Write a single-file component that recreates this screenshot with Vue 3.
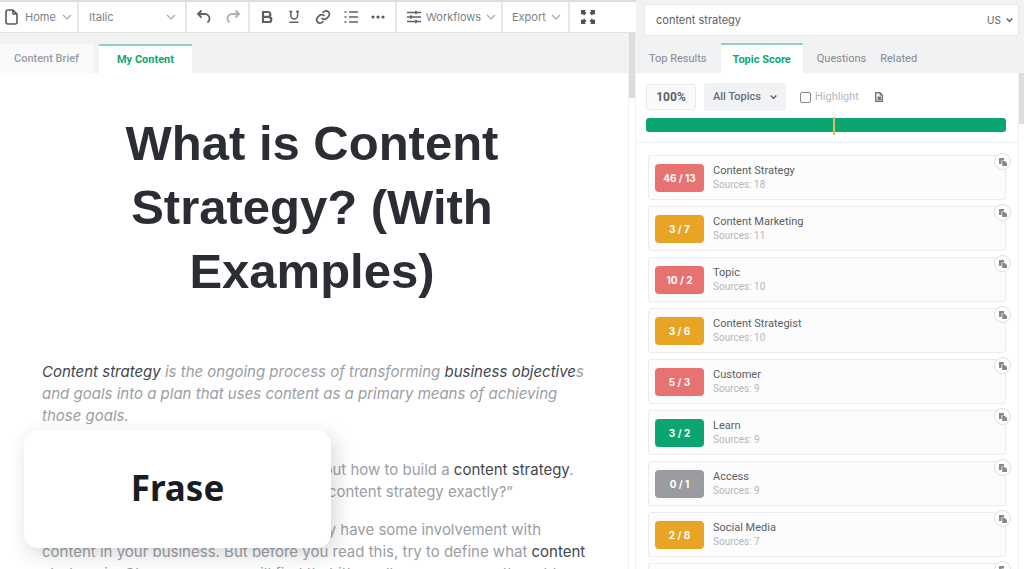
<script setup>
import { ref } from 'vue'

const query = ref('content strategy')
const highlight = ref(false)
const editorTabs = ['Content Brief', 'My Content']
const panelTabs = ['Top Results', 'Topic Score', 'Questions', 'Related']
const topics = [
  { score: '46 / 13', name: 'Content Strategy', sources: 18, tone: 'red' },
  { score: '3 / 7', name: 'Content Marketing', sources: 11, tone: 'amber' },
  { score: '10 / 2', name: 'Topic', sources: 10, tone: 'red' },
  { score: '3 / 6', name: 'Content Strategist', sources: 10, tone: 'amber' },
  { score: '5 / 3', name: 'Customer', sources: 9, tone: 'red' },
  { score: '3 / 2', name: 'Learn', sources: 9, tone: 'green' },
  { score: '0 / 1', name: 'Access', sources: 9, tone: 'grey' },
  { score: '2 / 8', name: 'Social Media', sources: 7, tone: 'amber' },
  { score: '1 / 3', name: 'Audience', sources: 7, tone: 'amber' },
]
</script>

<template>
  <div class="app">
    <main class="editor">
      <div class="toolbar">
        <div class="group home">
          <button class="tool labelled">
            <svg width="14" height="18" viewBox="0 0 14 18"><path d="M3 2h5l4 4v8a2 2 0 0 1-2 2H3a2 2 0 0 1-2-2V4a2 2 0 0 1 2-2zM8 2v4h4" fill="none" stroke="#555a61" stroke-width="1.6" stroke-linejoin="round" /></svg>
            <span>Home</span>
            <svg class="chev" viewBox="0 0 10 6"><path d="M1 1l4 4 4-4" /></svg>
          </button>
        </div>
        <div class="group style">
          <select aria-label="Text style"><option>Italic</option></select>
          <svg class="chev" viewBox="0 0 10 6"><path d="M1 1l4 4 4-4" /></svg>
        </div>
        <div class="group history">
          <button class="tool" aria-label="Undo"><svg width="16" height="16" viewBox="0 0 16 16" class="line"><path d="M5.500 1.500L2 5l3.500 3.500M2.500 5h6.500a4.500 4.500 0 0 1 4.500 4.500v0a4.500 4.500 0 0 1-2 4" /></svg></button>
          <button class="tool faded" aria-label="Redo"><svg width="16" height="16" viewBox="0 0 16 16" class="line"><path d="M10.500 1.500L14 5l-3.500 3.500M13.500 5H7a4.500 4.500 0 0 0-4.500 4.500v0a4.500 4.500 0 0 0 2 4" /></svg></button>
        </div>
        <div class="group format">
          <button class="tool" aria-label="Bold"><svg width="14" height="14" viewBox="0 0 14 14" class="line bold"><path d="M3 2h5a2.400 2.400 0 0 1 0 4.800H3zM3 6.800h5.700a2.600 2.600 0 0 1 0 5.200H3z" /></svg></button>
          <button class="tool" aria-label="Underline"><svg width="14" height="14" viewBox="0 0 14 14" class="line under"><path d="M3.800 1.500v4a3.400 3.400 0 0 0 6.800 0v-4M2.300 1.500h3M9 1.500h3M2.500 12.300h9" /></svg></button>
          <button class="tool" aria-label="Link"><svg width="16" height="16" viewBox="0 0 24 24" class="line link"><path d="M10 13.500a5 5 0 0 0 7.500.5l3-3a5 5 0 0 0-7-7l-2 1.800M14 10.500a5 5 0 0 0-7.500-.5l-3 3a5 5 0 0 0 7 7l2-1.800" /></svg></button>
          <button class="tool" aria-label="List"><svg width="14" height="14" viewBox="0 0 14 14" class="line list"><path d="M5 2h9M5 7h9M5 12h9M.5 2h2M.5 7h2M.5 12h2" /></svg></button>
          <button class="tool" aria-label="More"><svg width="14" height="4" viewBox="0 0 14 4" fill="#555a61"><circle cx="2" cy="2" r="1.600" /><circle cx="7" cy="2" r="1.600" /><circle cx="12" cy="2" r="1.600" /></svg></button>
        </div>
        <div class="group workflows">
          <button class="tool labelled">
            <svg width="14" height="14" viewBox="0 0 14 14" class="line list"><path d="M0 2.500h14M0 7h14M0 11.500h14M9 .8v3.400M4 5.300v3.400M9 9.800v3.400" /></svg>
            <span>Workflows</span>
            <svg class="chev" viewBox="0 0 10 6"><path d="M1 1l4 4 4-4" /></svg>
          </button>
        </div>
        <div class="group export">
          <button class="tool labelled">
            <span>Export</span>
            <svg class="chev" viewBox="0 0 10 6"><path d="M1 1l4 4 4-4" /></svg>
          </button>
        </div>
        <div class="group full">
          <button class="tool" aria-label="Full screen"><svg width="14" height="14" viewBox="0 0 14 14" fill="#4e5258"><path d="M0 0h5L3.700 1.300l1.800 1.800L3.100 5.500 1.300 3.700 0 5zM14 0H9l1.300 1.300-1.800 1.800 2.400 2.400 1.800-1.800L14 5zM0 14h5l-1.300-1.300 1.800-1.800-2.400-2.400-1.800 1.800L0 9zM14 14H9l1.300-1.300-1.800-1.800 2.400-2.400 1.800 1.800L14 9z" /></svg></button>
        </div>
      </div>

      <div class="workspace">
        <div class="page">
          <nav class="tabs">
            <button v-for="(tab, i) in editorTabs" :key="tab" class="tab" :class="{ active: i === 1 }">{{ tab }}</button>
          </nav>
          <article class="document">
            <h1>What is Content<br>Strategy? (With<br>Examples)</h1>
            <p class="intro"><em><b>Content strategy</b> is the ongoing process of transforming <b>business objective</b>s<br>and goals into a plan that uses content as a primary means of achieving<br>those goals.</em></p>
            <p>There is so much guidance out there about how to build a <b>content strategy</b>.<br>But you might also be asking, “what is a content strategy exactly?”</p>
            <p>If you are a digital marketer, you probably have some involvement with<br>content in your business. But before you read this, try to define what <b>content</b><br>strategy is. Chances are you will find that it's really one common thought.</p>
          </article>
        </div>
        <div class="track"><div class="thumb"></div></div>
      </div>
      <aside class="caption">Frase</aside>
    </main>

    <section class="panel">
      <div class="search">
        <input v-model="query" type="text" aria-label="Search query">
        <div class="country">
          <select aria-label="Country"><option>US</option></select>
          <svg class="chev dark" viewBox="0 0 10 6"><path d="M1 1l4 4 4-4" /></svg>
        </div>
      </div>
      <nav class="panel-tabs">
        <button v-for="(tab, i) in panelTabs" :key="tab" class="tab" :class="{ active: i === 1 }">{{ tab }}</button>
      </nav>
      <div class="results">
        <div class="scroll">
          <div class="summary">
            <div class="controls">
              <output class="percent">100%</output>
              <div class="filter">
                <select aria-label="Topic filter"><option>All Topics</option></select>
                <svg class="chev dark" viewBox="0 0 10 6"><path d="M1 1l4 4 4-4" /></svg>
              </div>
              <label class="highlight"><input v-model="highlight" type="checkbox">Highlight</label>
              <button class="tool" aria-label="Export topics"><svg width="8" height="10" viewBox="0 0 8 10"><path d="M.7.7h4.300l2.300 2.300v6.300H.7z" fill="none" stroke="#73777d" stroke-width="1.400" /><path d="M4.500.5v3h3M2.500 4.500h3.500v3.500H2.500z" fill="#73777d" /></svg></button>
            </div>
            <div class="meter"><span class="marker"></span></div>
          </div>
          <ul class="topics">
            <li v-for="topic in topics" :key="topic.name" class="topic">
              <span class="score" :class="topic.tone">{{ topic.score }}</span>
              <div class="info">
                <div class="name">{{ topic.name }}</div>
                <div class="sources">Sources: {{ topic.sources }}</div>
              </div>
              <button class="copy" :aria-label="'Copy ' + topic.name"><svg width="8" height="8" viewBox="0 0 8 8" fill="#85888e"><path d="M0 0h5v2.400H2.500V6H0z" /><path d="M3.200 3h2.600L8 5v3H3.200z" /></svg></button>
            </li>
          </ul>
        </div>
        <div class="track"><div class="thumb"></div></div>
      </div>
    </section>
  </div>
</template>

<style>
body { background: #fff; }
</style>

<style scoped>
* { box-sizing: border-box; }
.app {
  display: grid;
  grid-template-columns: 636fr 388fr;
  height: 100vh;
  overflow: hidden;
  font-family: Inter, "Liberation Sans", sans-serif;
  color: #7b7f85;
}
button, select, input { font: inherit; color: inherit; }
button { border: 0; padding: 0; background: none; cursor: pointer; }
select { appearance: none; border: 0; padding: 0; background: none; outline: 0; }
svg { display: block; flex: none; }
.chev { width: 10px; height: 6px; fill: none; stroke: #a4a7ab; stroke-width: 1.2; pointer-events: none; }
.chev.dark { width: 7px; stroke: #5d6167; stroke-width: 2; }
.line { fill: none; stroke: #5d6167; stroke-width: 1.8; }
.line.bold { stroke-width: 2.2; }
.line.under { stroke-width: 1.5; }
.line.list { stroke-width: 1.6; }
.line.link { stroke-width: 2.6; }

.editor { position: relative; display: flex; flex-direction: column; min-width: 0; min-height: 0; }
.toolbar {
  display: flex;
  flex: none;
  height: 33px;
  border-top: 2px solid #dcdddf;
  border-bottom: 1px solid #e1e2e4;
  background: #fff;
  font-size: 11px;
}
.group { display: flex; align-items: center; border-right: 2px solid #e6e7e9; }
.group.full { flex: 1; padding-left: 11px; border-right: 0; }
.labelled { display: flex; align-items: center; gap: 6px; }
.home { width: 79px; padding-left: 5px; }
.style { width: 108px; padding: 0 9px 0 10px; }
.style select { flex: 1; }
.history { width: 63px; padding-left: 9px; gap: 13px; }
.faded { opacity: 0.5; }
.format { width: 147px; padding: 0 10px; justify-content: space-between; }
.workflows { width: 106px; padding-left: 10px; }
.workflows .labelled { gap: 5px; }
.export { width: 67px; padding-left: 9px; }
.export .labelled { gap: 5px; }

.workspace { display: grid; grid-template-columns: 1fr 8px; flex: 1; min-height: 0; }
.page { min-width: 0; overflow: hidden; }
.tabs { display: flex; gap: 6px; height: 40px; padding-top: 11px; background: #f1f2f4; }
.tab { font-size: 11px; font-family: Roboto, sans-serif; font-weight: 500; color: #999ca1; }
.tabs .tab { width: 93px; background: #fafafb; }
.tabs .tab.active { background: #fff; }
.tab.active { color: #0ea871; font-weight: 700; border-top: 2px solid #8bd5b8; }
.track { border-left: 1px solid #f1f2f4; border-right: 1px solid #f1f2f4; }
.thumb { height: 65px; background: #dcdddf; }

.document { padding: 38px 42px 0; white-space: nowrap; }
h1 {
  margin: 0 0 58px;
  padding-right: 4px;
  text-align: center;
  font: 700 49px/64px "Liberation Sans", Arial, sans-serif;
  color: #2a2d33;
}
p { margin: 0 0 16px; font-size: 15px; line-height: 22px; color: #9b9ea3; }
p.intro { margin-bottom: 32px; }
p b { font-weight: 400; color: #43474e; }
.caption {
  position: absolute;
  left: 24px;
  bottom: 21px;
  display: grid;
  place-items: center;
  width: 307px;
  height: 118px;
  padding-bottom: 2px;
  border-radius: 14px;
  background: #fff;
  box-shadow: 4px 6px 20px rgba(30, 35, 45, 0.18);
  font: 700 35px/48px "Noto Sans", sans-serif;
  color: #1b1c1f;
}

.panel { display: flex; flex-direction: column; min-width: 0; min-height: 0; background: #f1f2f4; }
.search {
  display: flex;
  align-items: center;
  flex: none;
  height: 32px;
  margin: 4px 5px 7px 8px;
  padding: 0 5px 0 11px;
  border: 1px solid #e6e7e9;
  border-radius: 3px;
  background: #fff;
  font-size: 11px;
  color: #5d6167;
}
.search input { flex: 1; min-width: 0; padding: 0; border: 0; outline: 0; background: none; }
.country { display: flex; align-items: center; gap: 5px; font-size: 10px; }
.panel-tabs { display: flex; flex: none; height: 30px; padding-left: 13px; }
.panel-tabs .tab { margin-right: 14px; font-weight: 400; color: #85888e; }
.panel-tabs .tab.active { padding: 0 12px; background: #fff; font-weight: 700; color: #0ea871; }
.results { display: grid; grid-template-columns: 1fr 6px; flex: 1; min-height: 0; background: #fff; }
.results .track { border-right: 0; }
.results .thumb { height: 51px; }
.scroll { min-width: 0; overflow: hidden; }
.summary { padding: 10px 12px 10px 10px; border-bottom: 1px solid #eeeff1; }
.controls { display: flex; align-items: center; height: 28px; }
.percent {
  width: 50px;
  border: 1px solid #e9eaec;
  border-radius: 3px;
  background: #fafafb;
  text-align: center;
  font: 700 12px/24px Roboto, sans-serif;
  color: #5d6167;
}
.filter {
  display: flex;
  align-items: center;
  gap: 8px;
  height: 28px;
  margin: 0 14px 0 8px;
  padding: 0 9px;
  border-radius: 3px;
  background: #f1f2f4;
  font: 500 11px/14px Roboto, sans-serif;
  color: #6a6e74;
}
.highlight { display: flex; align-items: center; gap: 4px; margin-right: 16px; font: 400 11px/14px Roboto, sans-serif; color: #b4b6ba; }
.highlight input { appearance: none; width: 11px; height: 11px; margin: 0; border: 1px solid #85888e; border-radius: 2px; }
.meter { position: relative; height: 14px; margin-top: 7px; border-radius: 3px; background: #0ba572; }
.marker { position: absolute; left: 52%; top: -1px; width: 2px; height: 18px; background: #e8b957; }
.topics { display: flex; flex-direction: column; gap: 6px; margin: 0; padding: 12px 12px 0 12px; list-style: none; }
.topic {
  position: relative;
  display: flex;
  align-items: center;
  gap: 9px;
  flex: none;
  height: 45px;
  padding-left: 6px;
  border: 1px solid #ebecee;
  border-radius: 3px;
  background: #fcfcfc;
  font-family: Roboto, sans-serif;
}
.score { width: 49px; border-radius: 4px; text-align: center; font: 700 10px/28px Inter, sans-serif; color: #fff; }
.red { background: #e87171; }
.amber { background: #e9a425; }
.green { background: #0ba572; }
.grey { background: #999b9f; }
.name { font-size: 11px; line-height: 14px; color: #5a5e65; }
.sources { font-size: 10px; line-height: 14px; color: #b4b6ba; }
.copy {
  position: absolute;
  right: -6px;
  top: -3px;
  display: grid;
  place-items: center;
  width: 17px;
  height: 17px;
  border: 1px solid #dcdddf;
  border-radius: 50%;
  background: #fff;
}
</style>
